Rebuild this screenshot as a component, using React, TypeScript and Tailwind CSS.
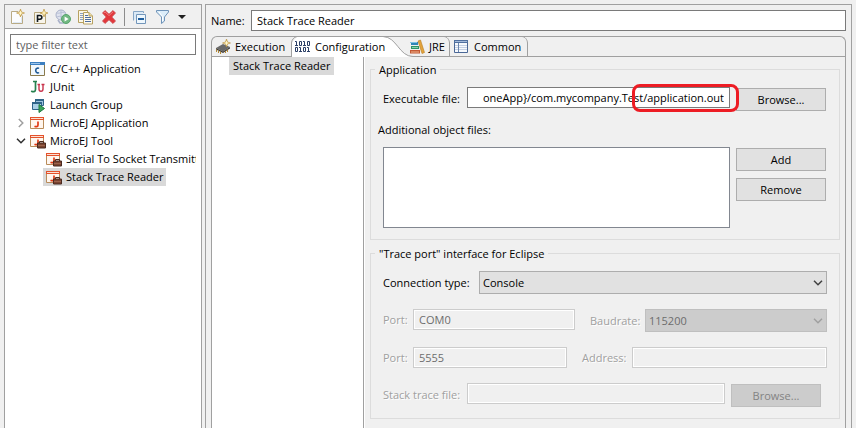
import type { ComponentPropsWithoutRef, ReactNode } from "react";

function Icon({ children }: { children: ReactNode }) {
  return (
    <svg viewBox="0 0 16 16" aria-hidden="true" className="relative h-4 w-4 shrink-0">
      {children}
    </svg>
  );
}

const Sparkle = ({ x, y }: { x: number; y: number }) => (
  <g transform={`translate(${x} ${y})`}>
    <path d="M0 -4L1 -1L4 0L1 1L0 4L-1 1L-4 0L-1 -1Z" fill="#e6c775" stroke="#b8913c" strokeWidth=".6" />
    <path d="M0 -1.8V1.8M-1.8 0H1.8" stroke="#fff8d0" strokeWidth="1" />
  </g>
);

const NewIcon = () => (
  <Icon>
    <path d="M2.5 2.5H9L13.5 7V14.5H2.5Z" fill="#fbfcfe" stroke="#b9ab85" />
    <path d="M4 13.5H12.5V8" fill="none" stroke="#dfe9f5" />
    <Sparkle x={11.5} y={4} />
  </Icon>
);

const PrototypeIcon = () => (
  <Icon>
    <path d="M2.5 3.5H13.5V14.5H2.5Z" fill="#f7f4ea" stroke="#b5a67c" />
    <path d="M5.5 13V6.5H8A1.800 1.800 0 0 1 8 10.200H5.500" fill="none" stroke="#101820" strokeWidth="1.600" />
    <Sparkle x={12} y={4} />
  </Icon>
);

const ExportIcon = () => (
  <Icon>
    <circle cx="6" cy="6" r="5" fill="#dfe3ee" stroke="#a9b1c9" />
    <path d="M2 4C5 5 7 2 10 4M2 8C5 6 7 9 10 7M6 1V11" fill="none" stroke="#b9c0d6" />
    <path d="M3 11L5 14H9" fill="none" stroke="#a9b1c9" strokeWidth="1.6" />
    <circle cx="11" cy="10" r="4.5" fill="#72b883" stroke="#57a56b" />
    <path d="M9.6 7.4L13.6 10L9.6 12.6Z" fill="#fff" />
  </Icon>
);

const CopyIcon = () => (
  <Icon>
    <path d="M.5 1.5H9.5V13.5H.5Z" fill="#fbf7e8" stroke="#b7a160" />
    <path d="M2 4.5H6M2 6.5H6M2 8.5H6M2 10.5H6" stroke="#8ba0bf" />
    <path d="M5.5 3.5H11L14.5 7V15H5.5Z" fill="#fdfaf0" stroke="#b7a160" />
    <path d="M11 3.5V7H14.5" fill="#ecdca0" stroke="#b7a160" />
    <path d="M7 6.5H10M7 8.5H13M7 10.5H13M7 12.5H13" stroke="#4f6f9f" />
  </Icon>
);

const DeleteIcon = () => (
  <Icon>
    <path
      d="M1.5 4L4 1.5L8 5.2L12 1.5L14.5 4L10.8 8L14.5 12L12 14.5L8 10.8L4 14.5L1.5 12L5.2 8Z"
      fill="#e2383c"
      stroke="#c94a4d"
      strokeWidth=".8"
    />
    <path d="M3 4L4 3L8 6.6L12 3" fill="none" stroke="#f08486" strokeWidth=".8" />
  </Icon>
);

const CollapseIcon = () => (
  <Icon>
    <path d="M1.5 11.5V2.5H11.5V4" fill="#dbe9f5" stroke="#86a6c6" />
    <path d="M4.5 5.5H13.5V14.5H4.5Z" fill="#eef7fd" stroke="#7396ba" />
    <path d="M6 10H12" stroke="#1f5f9f" strokeWidth="2" />
  </Icon>
);

const FilterIcon = () => (
  <Icon>
    <path d="M1.5 1.5H13.5V3L9.5 8V12L6.5 14.5V8L1.5 3Z" fill="#dcedf9" stroke="#6f93b8" />
    <path d="M4 3L7.5 7.5V12" fill="none" stroke="#fff" />
  </Icon>
);

const CAppIcon = () => (
  <Icon>
    <path d="M.5 1.5H14.5V14.5H.5Z" fill="#f2f8fd" stroke="#8a7a4c" />
    <path d="M0 1H15V4H0Z" fill="#3c7fc0" />
    <path d="M1 2.5H10" stroke="#9cc4ea" />
    <path d="M9 7.500C8.200 6.800 5.700 7 5.700 9.500S8.200 12.200 9 11.500" fill="none" stroke="#205a96" strokeWidth="1.600" />
  </Icon>
);

const JUnitIcon = () => (
  <Icon>
    <path d="M3 2.5H7M5.5 2.5V10.5C5.5 13 3 13.2 1.2 12" fill="none" stroke="#26804f" strokeWidth="1.7" />
    <path d="M7.5 5.5H10M9 5.5V10C9 13 13 13 13 10V5.5M11.5 5.5H14.5" fill="none" stroke="#c8324b" strokeWidth="1.4" />
  </Icon>
);

const LaunchGroupIcon = () => (
  <Icon>
    <path d="M5.5 2.5H13.5V8.5H5.5Z" fill="#9cc3de" stroke="#2f6488" />
    <path d="M5 3H14" stroke="#2f6488" strokeWidth="2" />
    <path d="M2.5 5.5H11.5V12.5H2.5Z" fill="#a9cfe6" stroke="#2f6488" />
    <path d="M2 6H12" stroke="#2f6488" strokeWidth="2" />
    <path d="M9 7.5L14.5 11.5L9 15.5Z" fill="#3aa55b" stroke="#1c7a3c" />
  </Icon>
);

const AppWindow = () => (
  <>
    <path d="M.5 2.5H13.5V13.5H.5Z" fill="#fff6ef" stroke="#b98c5a" />
    <path d="M0 2H14V5H0Z" fill="#e4512b" />
    <path d="M1 3.5H13" stroke="#fbe0d4" />
    <path d="M8 6.5V10C8 12 6 12 4.5 11.2" fill="none" stroke="#e23a14" strokeWidth="1.7" />
  </>
);

const MicroAppIcon = () => (
  <Icon>
    <AppWindow />
  </Icon>
);

const MicroToolIcon = () => (
  <Icon>
    <AppWindow />
    <path d="M9.5 10V8.5H13.5V10" fill="none" stroke="#4a2a20" />
    <path d="M7.5 10H15.5V15H7.5Z" fill="#7b4431" stroke="#4a2a20" />
    <path d="M8 12.5H15" stroke="#a87058" strokeWidth=".7" />
  </Icon>
);

const ChipIcon = () => (
  <Icon>
    <path d="M1 9L8 5L15 8L8 12.5Z" fill="#6a6a6a" />
    <path d="M1 9L8 12.5V14L1 10.5ZM8 12.5L15 8V9.5L8 14Z" fill="#3f3d3a" />
    <path d="M1.5 10.5V13M3.5 11.5V14M5.5 12.5V15M10.5 12V14M12.5 10.5V13" stroke="#b58a35" />
    <Sparkle x={11.5} y={4} />
  </Icon>
);

const One = ({ x, y }: { x: number; y: number }) => (
  <path d={`M${x} ${y + 1}H${x + 1.5}V${y + 5}M${x} ${y + 5}H${x + 3}`} fill="none" stroke="#2b3f66" />
);
const Zero = ({ x, y }: { x: number; y: number }) => (
  <path d={`M${x + 0.5} ${y + 1}H${x + 2.5}V${y + 5}H${x + 0.5}Z`} fill="none" stroke="#2b3f66" />
);

const BinaryIcon = () => (
  <Icon>
    <One x={0} y={1.5} />
    <Zero x={4} y={1.5} />
    <One x={8} y={1.5} />
    <Zero x={12} y={1.5} />
    <Zero x={0} y={7.5} />
    <One x={4} y={7.5} />
    <Zero x={8} y={7.5} />
    <One x={12} y={7.5} />
  </Icon>
);

const BooksIcon = () => (
  <Icon>
    <path d="M2 3H9V6H2Z" fill="#2f86b8" />
    <path d="M1 3.5H8" stroke="#7fc2e4" />
    <path d="M2 7H10V10H2Z" fill="#2c9468" />
    <path d="M3 8.5H9" stroke="#8ad0ac" />
    <path d="M1 11H11V14.5H1Z" fill="#c45a34" />
    <path d="M2 13H10" stroke="#f0b590" />
    <path d="M9 2L11.5 1L15.5 13.5L13 14.5Z" fill="#e3a33c" stroke="#b97c1e" strokeWidth=".6" />
  </Icon>
);

const TableIcon = () => (
  <Icon>
    <path d="M.5 1.5H13.5V13.5H.5Z" fill="#f6f9fd" stroke="#4a6796" />
    <path d="M0 1H14V4H0Z" fill="#4f6f9f" />
    <path d="M1 2.5H13" stroke="#a3b9da" />
    <path d="M1 6.5H13M1 8.5H13M1 10.5H13" stroke="#c4d0e4" />
    <path d="M4.5 4V13" stroke="#6c86ae" />
  </Icon>
);

function Chevron({ className }: { className: string }) {
  return (
    <svg viewBox="0 0 10 6" aria-hidden="true" className={`h-1.5 w-2.5 shrink-0 ${className}`}>
      <path d="M1 .8L5 4.8L9 .8" fill="none" stroke="currentColor" strokeWidth="1.5" />
    </svg>
  );
}

function ToolButton({ label, children }: { label: string; children: ReactNode }) {
  return (
    <button type="button" aria-label={label} className="flex h-4 w-4 items-center justify-center">
      {children}
    </button>
  );
}

function TreeRow({
  icon,
  label,
  level = 1,
  open,
  selected = false,
}: {
  icon: ReactNode;
  label: string;
  level?: number;
  open?: boolean;
  selected?: boolean;
}) {
  return (
    <li
      role="treeitem"
      aria-expanded={open}
      aria-selected={selected}
      className={`flex h-[18px] ${level === 2 ? "pl-[33px]" : "pl-[17px]"}`}
    >
      {open !== undefined && (
        <button
          type="button"
          aria-label={open ? "Collapse" : "Expand"}
          className="-ml-3 flex w-3 items-center justify-center"
        >
          <Chevron className={open ? "text-[#303030]" : "-rotate-90 text-[#a0a0a0]"} />
        </button>
      )}
      <span
        className={`flex items-center gap-1 whitespace-nowrap px-[3px] ${selected ? "bg-[#d9d9d9]" : ""}`}
      >
        {icon}
        {label}
      </span>
    </li>
  );
}

function LaunchTree() {
  return (
    <aside className="flex w-[198px] shrink-0 flex-col border border-b-0 border-[#a0a0a0] bg-white">
      <div className="flex h-6 shrink-0 items-center gap-[7px] border-b border-[#a0a0a0] bg-[#f0f0f0] pl-1">
        <ToolButton label="New launch configuration"><NewIcon /></ToolButton>
        <ToolButton label="New prototype"><PrototypeIcon /></ToolButton>
        <ToolButton label="Export"><ExportIcon /></ToolButton>
        <ToolButton label="Duplicate"><CopyIcon /></ToolButton>
        <ToolButton label="Delete"><DeleteIcon /></ToolButton>
        <span className="h-[18px] w-px bg-[#8c8c8c]" />
        <ToolButton label="Collapse all"><CollapseIcon /></ToolButton>
        <ToolButton label="Filter"><FilterIcon /></ToolButton>
        <button type="button" aria-label="Filter menu" className="flex h-4 w-2 items-center">
          <svg viewBox="0 0 8 4" aria-hidden="true" className="h-1 w-2">
            <path d="M0 0H8L4 4Z" fill="#202020" />
          </svg>
        </button>
      </div>
      <div className="flex flex-col gap-[5px] overflow-hidden px-[5px] pt-[5px]">
        <input
          type="text"
          aria-label="Filter"
          placeholder="type filter text"
          className="h-[21px] w-full border border-[#7a7a7a] bg-white px-[5px] outline-none placeholder:text-[#606060]"
        />
        <ul role="tree" className="overflow-hidden">
          <TreeRow icon={<CAppIcon />} label="C/C++ Application" />
          <TreeRow icon={<JUnitIcon />} label="JUnit" />
          <TreeRow icon={<LaunchGroupIcon />} label="Launch Group" />
          <TreeRow icon={<MicroAppIcon />} label="MicroEJ Application" open={false} />
          <TreeRow icon={<MicroToolIcon />} label="MicroEJ Tool" open />
          <TreeRow icon={<MicroToolIcon />} label="Serial To Socket Transmitter" level={2} />
          <TreeRow icon={<MicroToolIcon />} label="Stack Trace Reader" level={2} selected />
        </ul>
      </div>
    </aside>
  );
}

function TabEdge() {
  return (
    <svg viewBox="0 0 6 20" aria-hidden="true" className="h-5 w-1.5 shrink-0">
      <path d="M0 -.5C3 -.5 5.5 3 5.5 6V20M0 19.5H6" fill="none" stroke="#a0a0a0" />
    </svg>
  );
}

function Tabs() {
  return (
    <div role="tablist" className="flex h-[21px] overflow-hidden rounded-t-[6px] border border-b-0 border-[#a0a0a0]">
      <button
        type="button"
        role="tab"
        aria-selected="false"
        className="flex w-[79px] shrink-0 items-center gap-1 whitespace-nowrap border-b border-[#a0a0a0] pl-[3px]"
      >
        <ChipIcon />
        Execution
      </button>
      <button
        type="button"
        role="tab"
        aria-selected="true"
        className="relative flex w-[118px] shrink-0 items-center gap-1 whitespace-nowrap pl-1"
      >
        <svg viewBox="0 0 122 20" aria-hidden="true" className="absolute top-0 left-0 h-5 w-[122px]">
          <path d="M.5 20V6L6 0H92C106 0 108 19.5 122 19.5V20Z" fill="#fff" />
          <path d="M.5 20V6C.5 3 3 0 6 -.5M92 -.5C106 0 108 19.5 122 19.5" fill="none" stroke="#a0a0a0" />
        </svg>
        <BinaryIcon />
        <span className="relative">Configuration</span>
      </button>
      <button
        type="button"
        role="tab"
        aria-selected="false"
        className="flex w-[35px] shrink-0 items-center gap-1 whitespace-nowrap border-b border-[#a0a0a0]"
      >
        <BooksIcon />
        JRE
      </button>
      <TabEdge />
      <button
        type="button"
        role="tab"
        aria-selected="false"
        className="flex w-[72px] shrink-0 items-center gap-1 whitespace-nowrap border-b border-[#a0a0a0] pl-1"
      >
        <TableIcon />
        Common
      </button>
      <TabEdge />
      <span className="flex-1 border-b border-[#a0a0a0]" />
    </div>
  );
}

function TextBox({ className = "", disabled, ...rest }: ComponentPropsWithoutRef<"input">) {
  return (
    <input
      type="text"
      disabled={disabled}
      className={`h-[21px] min-w-0 border px-[5px] outline-none ${
        disabled
          ? "border-[#cccccc] bg-[#f0f0f0] text-[#6d6d6d] shadow-[inset_0_0_0_1px_#ffffff]"
          : "border-[#7a7a7a] bg-white"
      } ${className}`}
      {...rest}
    />
  );
}

function PushButton({ children, disabled = false }: { children: ReactNode; disabled?: boolean }) {
  return (
    <button
      type="button"
      disabled={disabled}
      className={`h-[23px] w-[90px] shrink-0 border ${
        disabled ? "border-[#bfbfbf] bg-[#cccccc] text-[#838383]" : "border-[#adadad] bg-[#e1e1e1]"
      }`}
    >
      {children}
    </button>
  );
}

function DropDown({ id, value, disabled = false }: { id: string; value: string; disabled?: boolean }) {
  return (
    <div className="relative flex flex-1">
      <select
        id={id}
        disabled={disabled}
        className={`h-[23px] w-full appearance-none border px-[3px] opacity-100 outline-none ${
          disabled ? "border-[#bfbfbf] bg-[#cccccc] text-[#6d6d6d]" : "border-[#adadad] bg-[#e1e1e1]"
        }`}
      >
        <option>{value}</option>
      </select>
      <Chevron
        className={`pointer-events-none absolute top-[9px] right-1 ${disabled ? "text-[#a0a0a0]" : "text-[#404040]"}`}
      />
    </div>
  );
}

const dim = "text-[#a0a0a0] [text-shadow:1px_1px_0_#ffffff]";

function Group({ title, children }: { title: string; children: ReactNode }) {
  return (
    <fieldset className="min-w-0 border border-[#dcdcdc] px-[7px] pb-[11px]">
      <legend className="-ml-[3px] px-1 leading-[17px]">{title}</legend>
      <div className="pt-[9px]">{children}</div>
    </fieldset>
  );
}

function ApplicationGroup() {
  return (
    <Group title="Application">
      <div className="flex gap-1.5 pr-1.5 pl-[5px]">
        <div className="relative flex h-6 flex-1 items-start">
          <label htmlFor="executable" className="w-[84px] shrink-0 pt-[3px] whitespace-nowrap">
            Executable file:
          </label>
          <TextBox
            id="executable"
            className="flex-1 text-right"
            defaultValue="oneApp}/com.mycompany.Test/application.out"
          />
          <span className="pointer-events-none absolute -top-[3px] -right-[9px] h-7 w-[107px] rounded-[8px] border-3 border-[#ed1c24]" />
        </div>
        <div className="pt-px">
          <PushButton>Browse...</PushButton>
        </div>
      </div>
      <label htmlFor="objects" className="mt-2.5 block">
        Additional object files:
      </label>
      <div className="mt-2 flex gap-1.5 pr-1.5 pl-[5px]">
        <select id="objects" size={4} className="h-[81px] flex-1 border border-[#828790] bg-white outline-none" />
        <div className="flex flex-col gap-[7px] pt-px">
          <PushButton>Add</PushButton>
          <PushButton>Remove</PushButton>
        </div>
      </div>
    </Group>
  );
}

function TracePortGroup() {
  return (
    <Group title={'"Trace port" interface for Eclipse'}>
      <div className="flex flex-col gap-[15px] px-[5px]">
        <div className="flex items-center">
          <label htmlFor="connection" className="w-24 shrink-0 whitespace-nowrap">Connection type:</label>
          <DropDown id="connection" value="Console" />
        </div>
        <div className="flex items-start">
          <label htmlFor="com-port" className={`w-[30px] shrink-0 pt-0.5 ${dim}`}>Port:</label>
          <TextBox id="com-port" disabled defaultValue="COM0" className="w-[162px]" />
          <label htmlFor="baudrate" className={`ml-[15px] w-[55px] shrink-0 pt-[3px] whitespace-nowrap ${dim}`}>
            Baudrate:
          </label>
          <DropDown id="baudrate" value="115200" disabled />
        </div>
        <div className="flex items-start">
          <label htmlFor="tcp-port" className={`w-[30px] shrink-0 pt-0.5 ${dim}`}>Port:</label>
          <TextBox id="tcp-port" disabled defaultValue="5555" className="w-[154px]" />
          <label htmlFor="address" className={`ml-[15px] w-[50px] shrink-0 pt-0.5 whitespace-nowrap ${dim}`}>
            Address:
          </label>
          <TextBox id="address" disabled className="flex-1" />
        </div>
        <div className="flex items-start pr-1.5">
          <label htmlFor="trace-file" className={`w-[84px] shrink-0 pt-[3px] whitespace-nowrap ${dim}`}>
            Stack trace file:
          </label>
          <TextBox id="trace-file" disabled className="mr-1.5 flex-1" />
          <div className="pt-px">
            <PushButton disabled>Browse...</PushButton>
          </div>
        </div>
      </div>
    </Group>
  );
}

export default function App() {
  return (
    <div className="flex min-h-screen gap-[3px] bg-[#f0f0f0] pt-1 pr-1 pl-1 font-['Open_Sans','Noto_Sans',sans-serif] text-[11px] leading-[18px] text-black">
      <LaunchTree />
      <main className="flex min-w-0 flex-1 flex-col border border-b-0 border-[#a0a0a0] px-[5px] pt-[5px]">
        <div className="flex items-center">
          <label htmlFor="name" className="w-10 shrink-0">Name:</label>
          <TextBox id="name" defaultValue="Stack Trace Reader" className="flex-1" />
        </div>
        <div className="mt-[5px] flex flex-1 flex-col">
          <Tabs />
          <div className="flex flex-1 border-x border-[#a0a0a0]">
            <div className="w-[152px] shrink-0 border-r border-[#a0a0a0] bg-white pl-[17px]">
              <span className="inline-block bg-[#d9d9d9] px-1">Stack Trace Reader</span>
            </div>
            <div className="flex min-w-0 flex-1 flex-col gap-[5px] border-l border-white pt-1 pr-[5px] pb-2 pl-[5px]">
              <ApplicationGroup />
              <TracePortGroup />
            </div>
          </div>
        </div>
      </main>
    </div>
  );
}
